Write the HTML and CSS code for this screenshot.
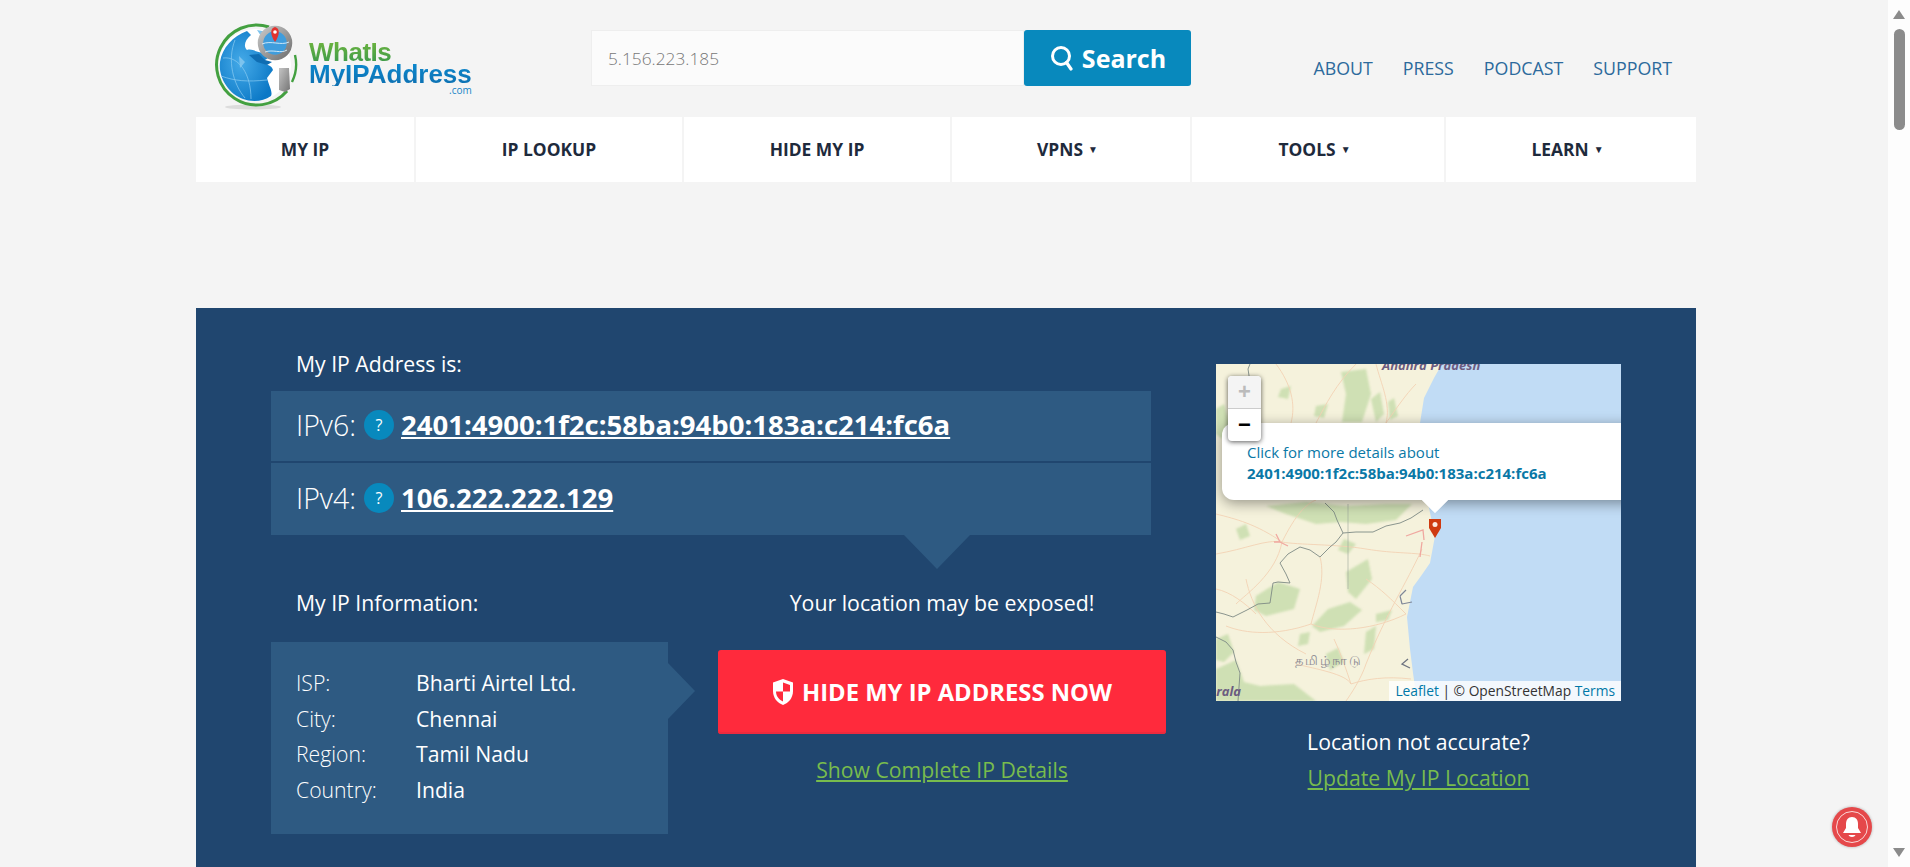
FILE: index.html
```html
<!DOCTYPE html>
<html>
<head>
  <title>What Is My IP Address</title>
  <link rel="stylesheet" href="styles.css">
</head>
<body>
  <div id="page">
    <main id="main">
      <div id="container">
        <header id="header">
          <a class="logo" href="#">
            <svg class="logo-globe" width="84" height="90" viewBox="0 0 84 90">
              <defs>
                <radialGradient id="sea" cx="40%" cy="45%" r="65%">
                  <stop offset="0" stop-color="#45aae8"/>
                  <stop offset="1" stop-color="#0b78c6"/>
                </radialGradient>
                <linearGradient id="steel" x1="0" y1="0" x2="1" y2="1">
                  <stop offset="0" stop-color="#c4c4c4"/>
                  <stop offset="1" stop-color="#747474"/>
                </linearGradient>
              </defs>
              <ellipse cx="38" cy="85" rx="28" ry="2.500" fill="#dcdcdc"/>
              <path d="M54 5A40 40 0 1 0 72 69" fill="none" stroke="#43a040" stroke-width="3"/>
              <path d="M80 33A40 40 0 0 1 77 60" fill="none" stroke="#43a040" stroke-width="2.400"/>
              <circle cx="40" cy="43" r="36" fill="#fff"/>
              <path d="M5 40C7 26 18 14 32 9L36 13C30 18 28 24 32 28 38 26 44 32 48 30L53 36 47 40C52 44 56 42 58 48L52 56C54 64 58 70 56 74 48 80 36 80 28 77 14 72 3 56 5 40Z" fill="url(#sea)"/>
              <path d="M34 33L44 32 50 38 57 40 52 43 42 40Z" fill="#0f6db2"/>
              <path d="M42 8L52 10 46 14ZM24 34L30 40 25 46Z" fill="#7cc3ee"/>
              <path d="M8 36C24 34 36 52 36 77M20 18C12 38 18 62 30 76M6 54C20 59 32 60 52 58" fill="none" stroke="#8ccdf2" stroke-width=".7"/>
              <circle cx="60" cy="21" r="14.500" fill="#3f9ddd" stroke="url(#steel)" stroke-width="5.500"/>
              <path d="M47 22C56 18 66 24 74 20M50 30C58 27 66 32 72 28" fill="none" stroke="#cfe8f8" stroke-width="1"/>
              <path d="M60 20C55 13 55 6 60 5 65 6 65 13 60 20Z" fill="#e2332f"/>
              <circle cx="60" cy="10" r="1.800" fill="#fff"/>
              <path d="M64 46H74L75 67 70 70 64 68Z" fill="url(#steel)"/>
            </svg>
            <span class="logo-text">
              <span class="logo-what">WhatIs</span>
              <span class="logo-my">MyIPAddress</span>
              <span class="logo-com">.com</span>
            </span>
          </a>
          <form class="search">
            <input class="search-input" type="text" value="5.156.223.185">
            <button class="search-btn" type="button">
              <svg width="26" height="26" viewBox="0 0 26 26"><circle cx="12" cy="11" r="8.500" fill="none" stroke="#fff" stroke-width="3"/><path d="M17.500 17.500L22 24" stroke="#fff" stroke-width="3.200" stroke-linecap="round"/></svg>
              Search
            </button>
          </form>
          <nav class="toplinks">
            <a href="#">ABOUT</a>
            <a href="#">PRESS</a>
            <a href="#">PODCAST</a>
            <a href="#">SUPPORT</a>
          </nav>
        </header>

        <nav id="menu">
          <a class="menu-item w-first" href="#">MY IP</a>
          <a class="menu-item w-wide" href="#">IP LOOKUP</a>
          <a class="menu-item w-wide" href="#">HIDE MY IP</a>
          <a class="menu-item w-vpn" href="#">VPNS <span class="caret">▼</span></a>
          <a class="menu-item w-tools" href="#">TOOLS <span class="caret">▼</span></a>
          <a class="menu-item w-learn" href="#">LEARN <span class="caret">▼</span></a>
        </nav>

        <section id="hero">
          <div class="hero-left">
            <div class="label">My IP Address is:</div>
            <div class="ip-panel">
              <div class="ip-row first">
                <span class="ip-kind">IPv6:</span>
                <span class="help">?</span>
                <a class="ip-value" href="#">2401:4900:1f2c:58ba:94b0:183a:c214:fc6a</a>
              </div>
              <div class="ip-row second">
                <span class="ip-kind">IPv4:</span>
                <span class="help">?</span>
                <a class="ip-value" href="#">106.222.222.129</a>
              </div>
            </div>
            <div class="hero-lower">
              <div class="info-col">
                <div class="label">My IP Information:</div>
                <div class="info-box">
                  <div class="info-row"><span class="info-key">ISP:</span><span>Bharti Airtel Ltd.</span></div>
                  <div class="info-row"><span class="info-key">City:</span><span>Chennai</span></div>
                  <div class="info-row"><span class="info-key">Region:</span><span>Tamil Nadu</span></div>
                  <div class="info-row"><span class="info-key">Country:</span><span>India</span></div>
                </div>
              </div>
              <div class="cta-col">
                <div class="exposed">Your location may be exposed!</div>
                <a class="hide-btn" href="#">
                  <svg width="22" height="28" viewBox="0 0 22 28">
                    <path d="M11 1L21 4.500V13C21 20 16.500 25 11 27 5.500 25 1 20 1 13V4.500Z" fill="#fff"/>
                    <path d="M11 4.500L18 7V13.500H11ZM11 13.500V23.500C7.500 22 4 18.500 4 13.500Z" fill="#ff2a3c"/>
                  </svg>
                  HIDE MY IP ADDRESS NOW
                </a>
                <a class="green-link details" href="#">Show Complete IP Details</a>
              </div>
            </div>
          </div>

          <div class="hero-right">
            <div class="map">
              <svg class="map-tiles" width="405" height="337" viewBox="0 0 405 337">
                <rect width="405" height="337" fill="#c1dcf5"/>
                <path d="M0 0H226L218 14 208 34 204 59 210 130 219 172 214 199 205 212 197 223 191 253 194 285 197 309 201 337H0Z" fill="#f5f2dc"/>
                <g class="map-green">
                  <path d="M125 8L150 5 155 30 146 58 126 58 130 30Z"/>
                  <path d="M155 35L164 28 168 50 160 58Z"/>
                  <path d="M172 38L178 34 182 52 174 56Z"/>
                  <path d="M65 25L75 22 72 35 62 33Z"/>
                  <path d="M100 42L112 40 108 54 98 52Z"/>
                  <path d="M0 45L8 40 14 60 6 75 0 70Z"/>
                  <path d="M130 208L152 195 156 215 140 235 132 228Z"/>
                  <path d="M40 232L62 218 84 225 78 245 50 252 38 246Z"/>
                  <path d="M96 262L112 245 134 238 146 246 128 262 104 268Z"/>
                  <path d="M160 250L176 246 172 256 160 258Z"/>
                  <path d="M0 305L20 296 28 318 44 322 78 320 100 337H0Z"/>
                  <path d="M150 268L160 262 158 285 148 290Z"/>
                  <path d="M0 275L12 270 18 288 8 298 0 296Z"/>
                  <path d="M50 142L90 138 130 142 170 140 196 140 180 156 150 160 125 158 100 160 70 150Z"/>
                  <path d="M128 175L140 180 132 190 122 186Z"/>
                  <path d="M20 165L30 160 34 172 24 176Z"/>
                  <path d="M84 270L94 268 92 280 82 282Z"/>
                  <path d="M110 290L122 284 128 298 114 306Z"/>
                </g>
                <g fill="none" stroke="#f3d3b4" stroke-width=".9">
                  <path d="M0 190C30 185 50 175 66 178S120 180 150 185 200 188 214 192"/>
                  <path d="M66 178C60 210 30 230 20 240"/>
                  <path d="M66 178C80 150 90 140 100 136"/>
                  <path d="M206 185C190 220 170 250 150 300 145 315 135 330 130 337"/>
                  <path d="M95 260C120 270 160 265 190 250"/>
                  <path d="M60 0C75 20 80 40 75 59"/>
                  <path d="M140 0C120 20 110 40 100 59"/>
                  <path d="M200 20C190 30 180 45 170 59"/>
                  <path d="M80 300C100 305 130 310 135 320"/>
                  <path d="M30 215C35 240 50 270 90 290"/>
                  <path d="M0 150C20 155 40 160 66 178"/>
                  <path d="M104 193C110 215 100 240 95 260"/>
                  <path d="M10 262C30 270 60 272 95 260"/>
                  <path d="M0 225C15 228 30 240 40 250"/>
                  <path d="M150 215C165 225 175 235 190 250"/>
                  <path d="M135 320C150 315 170 312 195 315"/>
                  <path d="M118 275C125 290 130 305 135 320"/>
                  <path d="M160 0C165 20 175 40 170 59"/>
                </g>
                <g fill="none" stroke="#f0a8a0" stroke-width="1.300">
                  <path d="M190 172L207 166 208 176M206 178L204 193"/>
                  <path d="M60 170L64 178 72 182M58 178L64 178"/>
                </g>
                <g fill="none" stroke="#7e8a84" stroke-width=".9">
                  <path d="M207 146L195 154 184 159 170 162 157 168 140 168 127 169 121 156 118 148 109 139"/>
                  <path d="M127 169L120 178 114 183 104 193 94 186 84 183 72 190 64 199 70 210 74 219 62 218 57 219 54 239 42 240 31 246 17 253 8 250 0 248"/>
                  <path d="M0 273L10 278 17 286 20 298 24 309 22 337"/>
                  <path d="M132 140V225" stroke="#9aa59a" stroke-width=".6"/>
                  <path d="M34 0L32 5 34 18"/>
                </g>
                <path d="M184 232L190 226M186 240L196 238M184 232L186 240" stroke="#7f8798" stroke-width="1.200" fill="none"/>
                <path d="M192 295L186 300 194 304" stroke="#6e7480" stroke-width="1.300" fill="none"/>
                <text class="map-place" x="166" y="6">Andhra Pradesh</text>
                <text class="map-place" x="-15" y="332">Kerala</text>
                <text class="map-tamil" x="79" y="301">தமிழ்நாடு</text>
              </svg>
              <svg class="map-marker" width="14" height="20" viewBox="0 0 14 20">
                <path d="M1 1H13V10L7 20 1 10Z" fill="#cf3a10"/>
                <circle cx="7" cy="6.500" r="2.500" fill="#fbe9e0"/>
              </svg>
              <div class="popup">
                <div>Click for more details about</div>
                <div class="popup-ip">2401:4900:1f2c:58ba:94b0:183a:c214:fc6a</div>
              </div>
              <div class="zoom-ctl">
                <div class="zoom-btn disabled">+</div>
                <div class="zoom-btn">−</div>
              </div>
              <div class="attribution"><a href="#">Leaflet</a> | © OpenStreetMap <a href="#">Terms</a></div>
            </div>
            <div class="not-accurate">Location not accurate?</div>
            <a class="green-link update" href="#">Update My IP Location</a>
          </div>
        </section>
      </div>
    </main>

    <aside id="scrollbar">
      <span class="sb-up"></span>
      <span class="sb-thumb"></span>
      <span class="sb-space"></span>
      <span class="sb-down"></span>
    </aside>
  </div>

  <div id="bell">
    <div class="bell-ring">
      <svg width="24" height="24" viewBox="0 0 24 24">
        <path d="M12 2C8 2 6 5 6 9V13L3 18H21L18 13V9C18 5 16 2 12 2Z" fill="#fff"/>
        <path d="M8.500 20H15.500C14.500 22.500 9.500 22.500 8.500 20Z" fill="#fff"/>
      </svg>
    </div>
  </div>
</body>
</html>
```

FILE: styles.css
```css
html, body {
  margin: 0;
  height: 100%;
  overflow: hidden;
}

body {
  font-family: "Open Sans", Arial, sans-serif;
  background-color: #f4f4f4;
  color: #fff;
}

a {
  color: inherit;
}

#page {
  display: flex;
  height: 867px;
}

#main {
  flex: 1;
  overflow: hidden;
}

#container {
  width: 1500px;
  margin-left: 196px;
}

/* header */
#header {
  display: flex;
  height: 117px;
}

.logo {
  display: flex;
  width: 395px;
  padding: 22px 0 0 19px;
  box-sizing: border-box;
  text-decoration: none;
}

.logo-globe {
  flex: none;
}

.logo-text {
  display: flex;
  flex-direction: column;
  margin: 20px 0 0 10px;
  font-family: "Liberation Sans", Arial, sans-serif;
  font-weight: bold;
}

.logo-what {
  font-size: 26px;
  line-height: 20px;
  letter-spacing: -0.5px;
  background: linear-gradient(#6cb33f, #3f9c4a);
  -webkit-background-clip: text;
  background-clip: text;
  color: transparent;
}

.logo-my {
  font-size: 26px;
  line-height: 24px;
  background: linear-gradient(#0c8ad0, #0d6fb0);
  -webkit-background-clip: text;
  background-clip: text;
  color: transparent;
}

.logo-com {
  font-family: "Open Sans", Arial, sans-serif;
  font-size: 10px;
  font-weight: normal;
  line-height: 8px;
  text-align: right;
  color: #1784c7;
}

.search {
  display: flex;
  height: 56px;
  margin-top: 30px;
}

.search-input {
  width: 433px;
  height: 56px;
  box-sizing: border-box;
  padding: 0 16px;
  border: 1px solid #eeeeee;
  background-color: #fbfbfb;
  font-family: "Open Sans", Arial, sans-serif;
  font-size: 17.300px;
  font-weight: 300;
  color: #777;
  outline: none;
}

.search-btn {
  display: flex;
  align-items: center;
  justify-content: center;
  gap: 7px;
  width: 167px;
  height: 56px;
  padding: 0;
  border: 0;
  border-radius: 3px;
  background-color: #0889bd;
  font-family: "Open Sans", Arial, sans-serif;
  font-size: 25px;
  font-weight: 700;
  color: #fff;
}

.toplinks {
  display: flex;
  gap: 30px;
  height: 24px;
  margin: 56px 0 0 auto;
  padding-right: 24px;
  font-size: 17.800px;
  line-height: 24px;
}

.toplinks a {
  text-decoration: none;
  color: #2c6a9c;
}

/* menu */
#menu {
  display: flex;
  gap: 2px;
  height: 65px;
}

.menu-item {
  display: flex;
  align-items: center;
  justify-content: center;
  gap: 5px;
  padding-bottom: 2px;
  box-sizing: border-box;
  background-color: #fff;
  font-size: 17.400px;
  font-weight: 700;
  text-decoration: none;
  color: #1e2a3c;
}

.w-first { width: 218px; }
.w-wide { width: 266px; }
.w-vpn { width: 238px; }
.w-tools { width: 252px; }
.w-learn { width: 250px; }

.caret {
  margin-right: 7px;
  font-size: 10px;
  font-weight: normal;
}

/* hero */
#hero {
  display: flex;
  height: 559px;
  margin-top: 126px;
  padding: 44px 0 0 75px;
  box-sizing: border-box;
  background-color: #20466f;
}

.hero-left {
  width: 895px;
}

.label {
  padding-left: 25px;
  font-size: 21.200px;
  line-height: 24px;
}

.ip-panel {
  position: relative;
  width: 880px;
  margin-top: 15px;
}

.ip-panel::after {
  content: "";
  position: absolute;
  left: 633px;
  top: 100%;
  border-style: solid;
  border-width: 34px 33px 0;
  border-color: #2e5a82 transparent transparent;
}

.ip-row {
  display: flex;
  align-items: center;
  padding: 0 0 3px 25px;
  box-sizing: border-box;
  background-color: #2e5a82;
}

.ip-row.first {
  height: 70px;
  margin-bottom: 2px;
}

.ip-row.second {
  height: 72px;
}

.ip-kind {
  font-size: 28.500px;
  font-weight: 300;
}

.help {
  width: 30px;
  height: 30px;
  margin: 0 7px 0 8px;
  border-radius: 50%;
  background-color: #0889bd;
  font-size: 16px;
  line-height: 30px;
  text-align: center;
}

.ip-value {
  font-size: 27.500px;
  font-weight: 700;
}

.hero-lower {
  display: flex;
  margin-top: 56px;
}

.info-col {
  width: 447px;
}

.info-box {
  position: relative;
  width: 397px;
  height: 192px;
  margin-top: 27px;
  padding: 23px 0 0 25px;
  box-sizing: border-box;
  background-color: #2e5a82;
}

.info-box::after {
  content: "";
  position: absolute;
  left: 100%;
  top: 21px;
  border-style: solid;
  border-width: 28px 0 28px 27px;
  border-color: transparent transparent transparent #2e5a82;
}

.info-row {
  display: flex;
  font-size: 21.200px;
  line-height: 35.500px;
}

.info-key {
  width: 120px;
  font-weight: 300;
}

.cta-col {
  display: flex;
  flex-direction: column;
  align-items: center;
  width: 448px;
}

.exposed {
  font-size: 21.300px;
  line-height: 24px;
}

.hide-btn {
  display: flex;
  align-items: center;
  justify-content: center;
  gap: 8px;
  width: 100%;
  height: 84px;
  margin-top: 35px;
  border-radius: 3px;
  background-color: #ff2a3c;
  box-shadow: inset 0 -2px 0 #ec2a3e;
  font-size: 23.800px;
  font-weight: 700;
  text-decoration: none;
}

.green-link {
  font-size: 21.200px;
  line-height: 24px;
  color: #78bc4d;
}

.details {
  margin-top: 24px;
}

.hero-right {
  display: flex;
  flex-direction: column;
  align-items: center;
  width: 405px;
  margin: 12px 0 0 50px;
}

/* map */
.map {
  position: relative;
  width: 405px;
  height: 337px;
  overflow: hidden;
}

.map-tiles {
  display: block;
}

.map-green {
  fill: #cfe0b4;
  filter: blur(1px);
}

.map-place {
  font-family: "Open Sans", Arial, sans-serif;
  font-size: 13px;
  font-weight: 700;
  font-style: italic;
  fill: #6b5b80;
}

.map-tamil {
  font-family: "Noto Sans", "DejaVu Sans", sans-serif;
  font-size: 13px;
  letter-spacing: 2px;
  fill: #8a8790;
}

.map-marker {
  position: absolute;
  left: 212px;
  top: 154px;
}

.popup {
  position: absolute;
  left: 6px;
  top: 59px;
  width: 440px;
  height: 77px;
  padding: 19px 0 0 25px;
  box-sizing: border-box;
  border-radius: 12px;
  background-color: #fff;
  box-shadow: 0 3px 14px rgba(0, 0, 0, .4);
  font-size: 15px;
  line-height: 21px;
  color: #0a78a6;
}

.popup::after {
  content: "";
  position: absolute;
  left: 201px;
  top: 65px;
  width: 24px;
  height: 24px;
  background-color: #fff;
  transform: rotate(45deg) scale(.8);
  clip-path: polygon(100% 0, 100% 100%, 0 100%);
}

.popup-ip {
  font-weight: 700;
}

.zoom-ctl {
  position: absolute;
  left: 12px;
  top: 12px;
  width: 33px;
  border-radius: 4px;
  background-color: #fff;
  box-shadow: 0 1px 5px rgba(0, 0, 0, .65);
  overflow: hidden;
}

.zoom-btn {
  height: 32px;
  font-family: "Liberation Sans", Arial, sans-serif;
  font-size: 22px;
  font-weight: 700;
  line-height: 32px;
  text-align: center;
  color: #000;
}

.zoom-btn.disabled {
  border-bottom: 1px solid #ccc;
  background-color: #f4f4f4;
  color: #bbb;
}

.attribution {
  position: absolute;
  right: 0;
  bottom: 0;
  padding: 0 6px;
  background-color: rgba(255, 255, 255, .8);
  font-size: 13.800px;
  line-height: 20px;
  color: #333;
}

.attribution a {
  text-decoration: none;
  color: #0078a8;
}

.not-accurate {
  margin-top: 29px;
  font-size: 21.200px;
  line-height: 24px;
}

.update {
  margin-top: 12px;
}

/* scrollbar */
#scrollbar {
  display: flex;
  flex-direction: column;
  align-items: center;
  width: 22px;
  background-color: #fdfdfd;
}

.sb-up, .sb-down {
  width: 0;
  height: 0;
  border-left: 6px solid transparent;
  border-right: 6px solid transparent;
}

.sb-up {
  margin-top: 10px;
  border-bottom: 9px solid #8b8b8b;
}

.sb-thumb {
  width: 11px;
  height: 101px;
  margin-top: 10px;
  border-radius: 6px;
  background-color: #8b8b8b;
}

.sb-space {
  flex: 1;
}

.sb-down {
  margin-bottom: 10px;
  border-top: 9px solid #8b8b8b;
}

/* notification bell */
#bell {
  position: fixed;
  left: 1832px;
  top: 807px;
  width: 40px;
  height: 40px;
  padding: 4px;
  box-sizing: border-box;
  border-radius: 50%;
  background-color: #e5484a;
  box-shadow: 0 0 3px rgba(0, 0, 0, .3);
}

.bell-ring {
  display: flex;
  align-items: center;
  justify-content: center;
  height: 100%;
  box-sizing: border-box;
  border: 1.500px solid #fbd9d9;
  border-radius: 50%;
}
```
